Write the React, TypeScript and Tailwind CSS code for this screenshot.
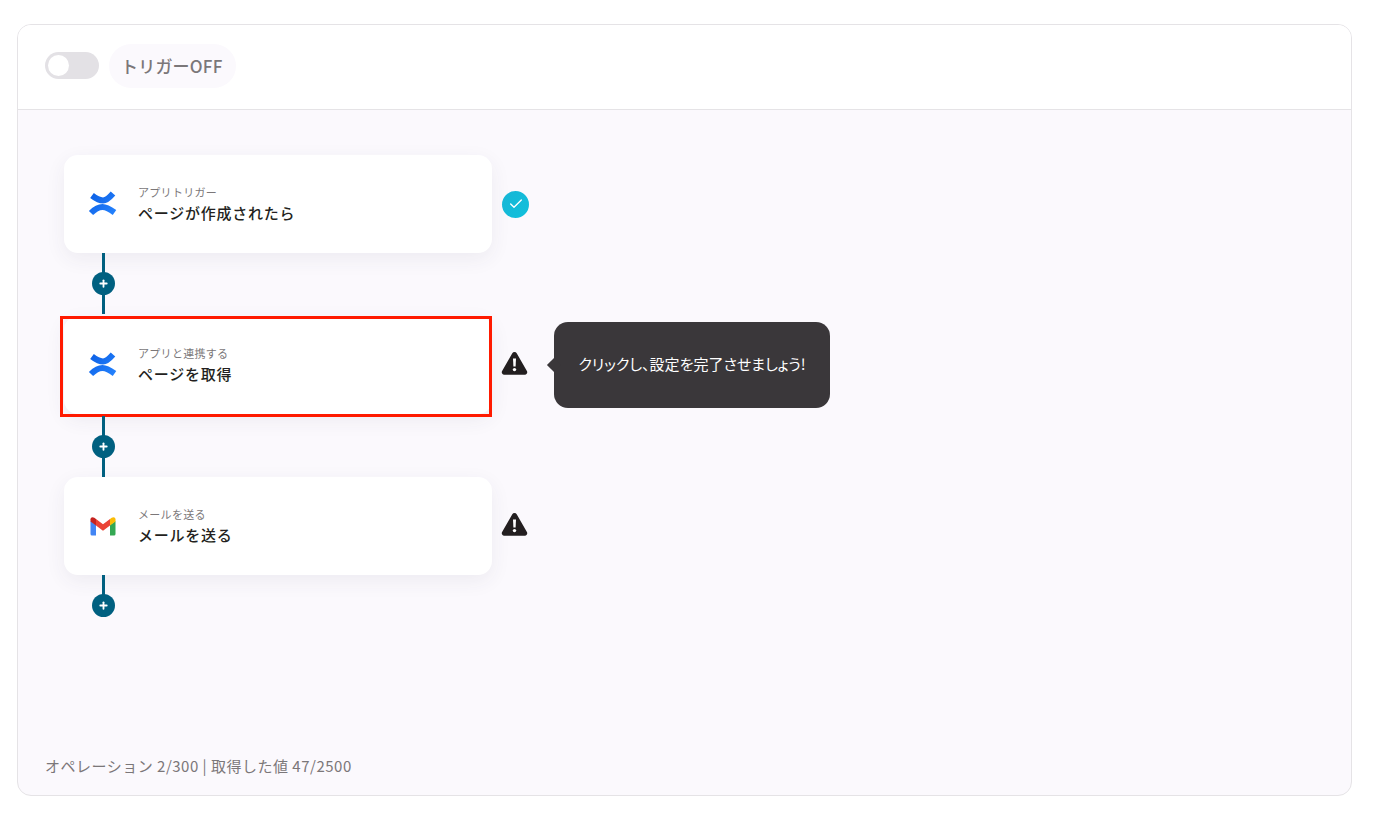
import { Plus, Check } from "lucide-react";

const font = { fontFamily: '"Noto Sans CJK JP", "Noto Sans", sans-serif' };

function ConfluenceIcon() {
    return (
        <svg width="30" height="30" viewBox="0 0 30 30" fill="none" aria-hidden="true">
            <defs>
                <linearGradient id="cf" gradientUnits="userSpaceOnUse" x1="3" y1="3" x2="27" y2="27">
                    <stop offset="0" stopColor="#0c5fe4" />
                    <stop offset="1" stopColor="#2684ff" />
                </linearGradient>
            </defs>
            <path d="M4 6.500Q10.500 11.500 15 11.500Q19 11.500 25 4.500" stroke="url(#cf)" strokeWidth="6" />
            <path d="M3 24Q9 18 14.500 18Q19 18 26.500 23.500" stroke="url(#cf)" strokeWidth="6" />
        </svg>
    );
}

function GmailIcon() {
    return (
        <svg width="28" height="22" viewBox="0 0 28 22" aria-hidden="true">
            <path d="M1.500 20.500V6l5.500 4v10.500H3a1.500 1.500 0 0 1-1.500-1.500z" fill="#4285f4" />
            <path d="M21 20.500V10l5.500-4v13a1.500 1.500 0 0 1-1.500 1.500z" fill="#34a853" />
            <path d="M21 4l-7 5.200L7 4v6.500l7 5.200 7-5.200z" fill="#ea4335" />
            <path d="M1.500 4.200v2.300L7 10.500V4L5.300 2.700C3.600 1.500 1.500 2.300 1.500 4.200z" fill="#c5221f" />
            <path d="M26.500 4.200v2.300L21 10.500V4l1.700-1.300c1.700-1.200 3.800-.4 3.800 1.500z" fill="#fbbc04" />
        </svg>
    );
}

function WarnIcon() {
    return (
        <svg width="27" height="24" viewBox="0 0 27 24" className="mb-[4px]" aria-hidden="true">
            <path d="M11.300 2.300a2.500 2.500 0 0 1 4.400 0l10.200 17.800a2.500 2.500 0 0 1-2.200 3.700H3.300a2.500 2.500 0 0 1-2.200-3.700z" fill="#231f20" />
            <path d="M12 7.500h3l-.4 8h-2.200z" fill="#fff" />
            <circle cx="13.500" cy="18.600" r="1.700" fill="#fff" />
        </svg>
    );
}

function PlusButton({ last }: { last?: boolean }) {
    return (
        <div className={last ? "h-[42px] w-[23px] flex items-end justify-center relative" : "h-[61px] w-[23px] flex items-center justify-center relative"}>
            <div className={last ? "absolute top-0 h-[31px] left-[10px] w-[3px] bg-[#006080]" : "absolute inset-y-0 left-[10px] w-[3px] bg-[#006080]"}></div>
            <div className="relative w-[23px] h-[23px] rounded-full bg-[#006080] flex items-center justify-center">
                <Plus size={11} strokeWidth={4} color="#fff" />
            </div>
        </div>
    );
}

function StepCard({ label, title, icon }: { label: string; title: string; icon: React.ReactNode }) {
    return (
        <div className="w-[428px] h-[98px] bg-white rounded-[14px] shadow-[0_6px_20px_rgba(60,50,90,0.07)] flex items-center pl-[24px]">
            <div className="w-[30px] flex justify-center">{icon}</div>
            <div className="ml-[20px] flex flex-col gap-[2px]">
                <span className="text-[11px] leading-[16px] tracking-[0.3px] text-[#7b7779]">{label}</span>
                <span className="text-[15px] leading-[22px] tracking-[0.75px] font-medium text-[#231f20]">{title}</span>
            </div>
        </div>
    );
}

export default function App() {
    return (
        <div className="h-[817px] bg-white pt-[24px] pl-[17px] pr-[21px]" style={font}>
            <div className="h-[772px] border border-[#e5e3e6] rounded-[14px] overflow-hidden flex flex-col bg-[#fbf9fd]">
                <div className="h-[85px] shrink-0 bg-white border-b border-[#e5e3e6] flex items-center pl-[27px] pb-[3px]">
                    <div className="w-[54px] h-[27px] rounded-full bg-[#e3e1e5] flex items-center pl-[3px]">
                        <div className="w-[21px] h-[21px] rounded-full bg-white"></div>
                    </div>
                    <div className="ml-[10px] h-[44px] px-[12px] w-[127px] rounded-full bg-[#fbf9fd] flex items-center text-[17px] tracking-[0.2px] font-medium text-[#7b7779]">
                        トリガーOFF
                    </div>
                </div>
                <div className="flex-1 relative pl-[46px] pt-[45px]">
                    <div className="flex items-center">
                        <StepCard label="アプリトリガー" title="ページが作成されたら" icon={<ConfluenceIcon />} />
                        <div className="ml-[10px] w-[27px] h-[27px] rounded-full bg-gradient-to-br from-[#17b6d6] to-[#10c0dc] flex items-center justify-center">
                            <Check size={16} strokeWidth={2} color="#fff" />
                        </div>
                    </div>
                    <div className="ml-[28px] h-[63px]"><PlusButton /></div>
                    <div className="flex items-center relative">
                        <StepCard label="アプリと連携する" title="ページを取得" icon={<ConfluenceIcon />} />
                        <div className="absolute left-[-4px] top-0 w-[432px] h-[101px] border-[3px] border-[#ff1a00]"></div>
                        <div className="ml-[9px]"><WarnIcon /></div>
                        <div className="relative ml-[26px] w-[276px] h-[86px] rounded-[14px] bg-[#3a373a] flex items-center justify-center text-[15px] [font-feature-settings:'palt'] text-white">
                            <div className="absolute left-[-5px] top-[38px] w-[10px] h-[10px] rotate-45 bg-[#3a373a]"></div>
                            <span className="pb-[2px]">クリックし、設定を完了させましょう!</span>
                        </div>
                    </div>
                    <div className="ml-[28px] h-[63px] pt-[2px]"><PlusButton /></div>
                    <div className="flex items-center">
                        <StepCard label="メールを送る" title="メールを送る" icon={<GmailIcon />} />
                        <div className="ml-[9px]"><WarnIcon /></div>
                    </div>
                    <div className="ml-[28px]"><PlusButton last /></div>
                    <div className="absolute left-[27px] bottom-[19px] text-[15px] leading-[20px] tracking-[0.5px] text-[#7b7779]">
                        オペレーション 2/300 | 取得した値 47/2500
                    </div>
                </div>
            </div>
        </div>
    );
}
